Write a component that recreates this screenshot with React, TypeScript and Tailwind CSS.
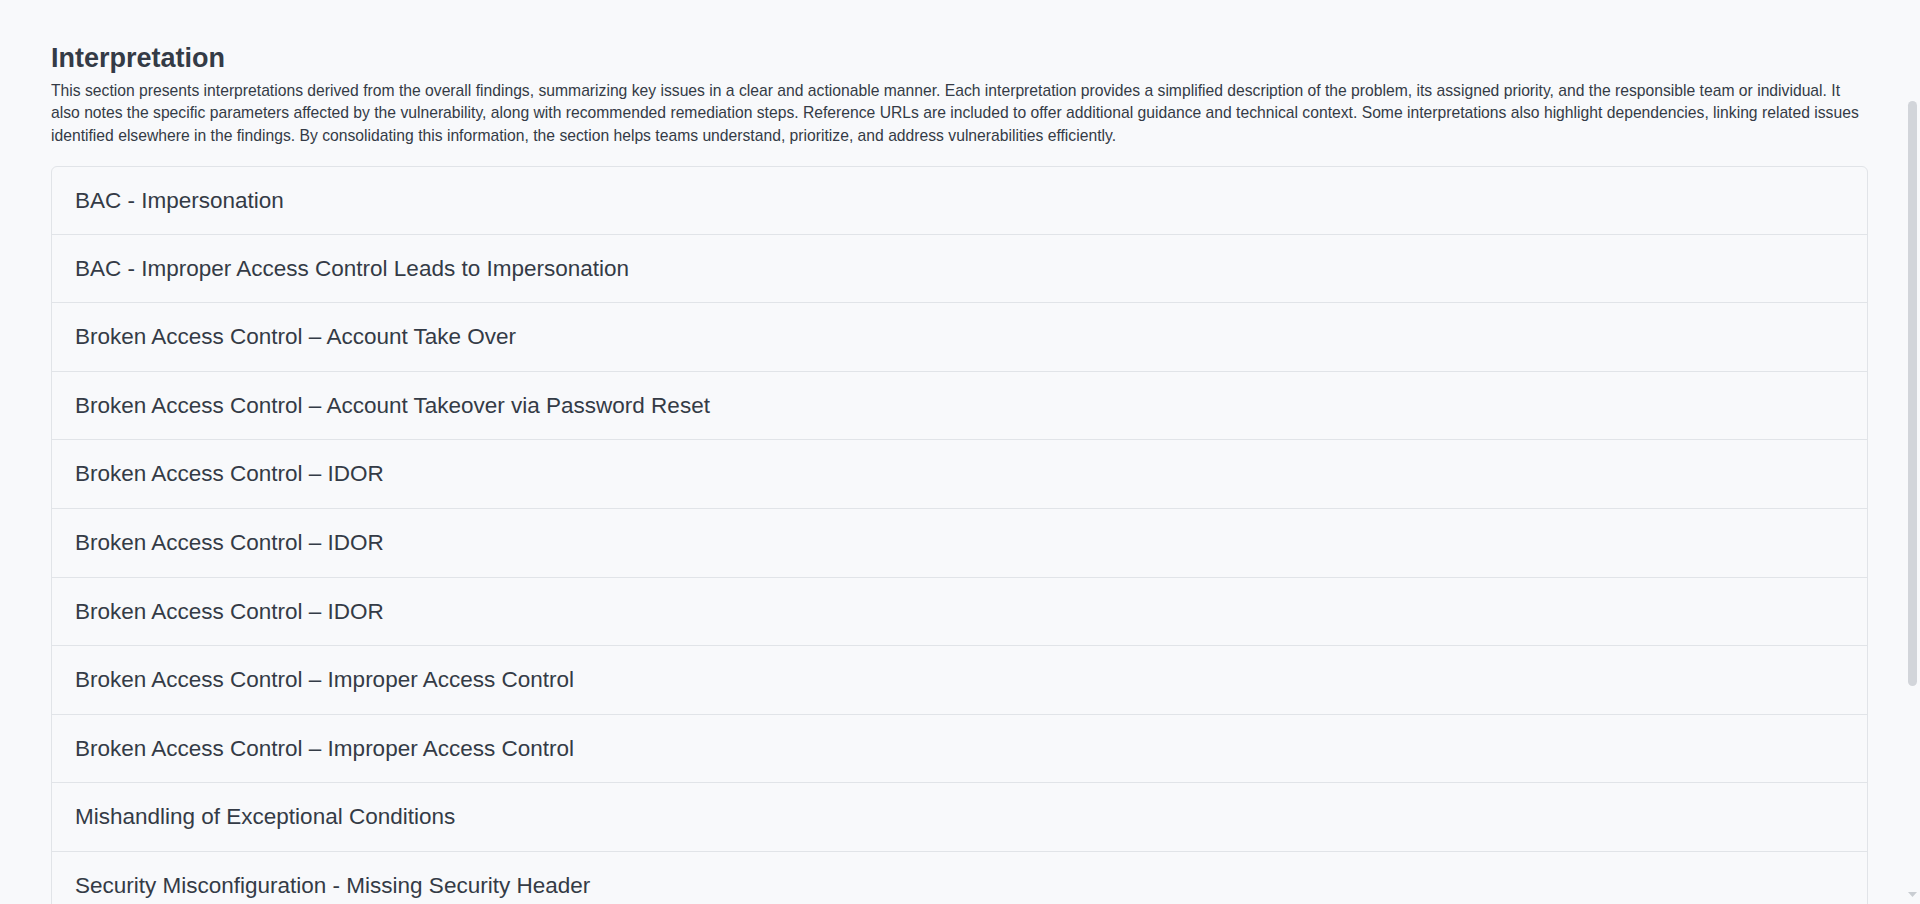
const findings: string[] = [
  "BAC - Impersonation",
  "BAC - Improper Access Control Leads to Impersonation",
  "Broken Access Control – Account Take Over",
  "Broken Access Control – Account Takeover via Password Reset",
  "Broken Access Control – IDOR",
  "Broken Access Control – IDOR",
  "Broken Access Control – IDOR",
  "Broken Access Control – Improper Access Control",
  "Broken Access Control – Improper Access Control",
  "Mishandling of Exceptional Conditions",
  "Security Misconfiguration - Missing Security Header",
  "Security Misconfiguration - Verbose Error Messages",
];

function FakeScrollbar() {
  return (
    <div className="w-[15px] shrink-0 flex flex-col items-center">
      <div className="h-[101px]" />
      <div className="w-[9px] h-[585px] rounded-full bg-[#d2d5da]" />
      <div className="flex-1" />
      <svg width="9" height="5" viewBox="0 0 9 5" className="mb-[7px]">
        <path d="M0 0 L9 0 L4.5 5 Z" fill="#c9cdd2" />
      </svg>
    </div>
  );
}

export default function App() {
  return (
    <div
      className="flex h-[904px] overflow-hidden bg-[#f8f9fb] text-[#343b46]"
      style={{ fontFamily: '"Liberation Sans", Arial, sans-serif' }}
    >
      <main className="flex-1 min-w-0 flex flex-col">
        <div className="h-px bg-[#dee2e6]" />
        <section className="pl-[51px] pr-[37px] pt-[42px]">
          <h2 className="text-[27px] font-bold leading-[1.2]">Interpretation</h2>
          <p className="mt-[5.5px] text-[15.7px] leading-[22.4px]">
            This section presents interpretations derived from the overall findings, summarizing key issues in a
            clear and actionable manner. Each interpretation provides a simplified description of the problem, its
            assigned priority, and the responsible team or individual. It also notes the specific parameters affected
            by the vulnerability, along with recommended remediation steps. Reference URLs are included to offer
            additional guidance and technical context. Some interpretations also highlight dependencies, linking
            related issues identified elsewhere in the findings. By consolidating this information, the section helps
            teams understand, prioritize, and address vulnerabilities efficiently.
          </p>

          <div className="mt-[19px] border border-[#e1e4e8] rounded-md">
            {findings.map((title, index) => (
              <button
                key={index}
                className={`w-full flex items-center pl-[23px] text-left text-[22.5px] ${
                  index > 0 ? "border-t border-[#e1e4e8] h-[68.6px]" : "h-[66.6px]"
                }`}
              >
                {title}
              </button>
            ))}
          </div>
        </section>
      </main>
      <FakeScrollbar />
    </div>
  );
}
